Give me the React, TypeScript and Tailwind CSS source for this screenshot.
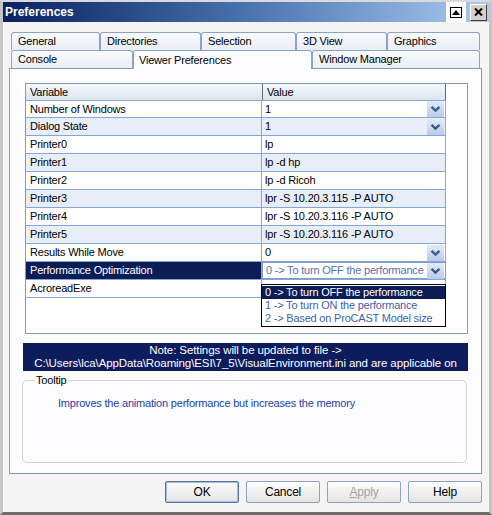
import React from "react";

type Row = { name: string; value: string; combo?: boolean };

const rows: Row[] = [
  { name: "Number of Windows", value: "1", combo: true },
  { name: "Dialog State", value: "1", combo: true },
  { name: "Printer0", value: "lp" },
  { name: "Printer1", value: "lp -d hp" },
  { name: "Printer2", value: "lp -d Ricoh" },
  { name: "Printer3", value: "lpr -S 10.20.3.115 -P AUTO" },
  { name: "Printer4", value: "lpr -S 10.20.3.116 -P AUTO" },
  { name: "Printer5", value: "lpr -S 10.20.3.116 -P AUTO" },
  { name: "Results While Move", value: "0", combo: true },
  { name: "Performance Optimization", value: "0 -> To turn OFF the performance", combo: true },
  { name: "AcroreadExe", value: "" },
];

const options = [
  "0 -> To turn OFF the performance",
  "1 -> To turn ON the performance",
  "2 -> Based on ProCAST Model size",
];

function DropBtn() {
  return (
    <div className="flex h-[16px] w-[17px] shrink-0 items-center justify-center bg-gradient-to-b from-[#e2ebf8] to-[#b7cbe9]">
      <svg width="11" height="8" viewBox="0 0 11 8">
        <path d="M1.5 1.8 L5.5 5.6 L9.5 1.8" fill="none" stroke="#3f5987" strokeWidth="2.3" />
      </svg>
    </div>
  );
}

function Tab({ label, w, active }: { label: string; w: string; active?: boolean }) {
  return (
    <div
      className={
        active
          ? `${w} relative z-10 -mb-px flex h-[19px] items-center rounded-t-[3px] border-x border-t border-[#8aa3c6] bg-[#fcfcfe] pl-[5px]`
          : `${w} flex h-[18px] items-center rounded-t-[3px] border-x border-t border-[#8aa3c6] bg-gradient-to-b from-[#f9fafd] to-[#e9eef6] pl-[6px]`
      }
    >
      {label}
    </div>
  );
}

function Button({ label, primary, disabled }: { label: React.ReactNode; primary?: boolean; disabled?: boolean }) {
  return (
    <div
      className={`flex h-[22px] w-[74px] items-center justify-center rounded-[2px] border bg-gradient-to-b from-[#fdfdfd] to-[#e4e4e4] text-[12px] ${
        primary ? "border-[#5a769e] shadow-[inset_0_0_0_1px_#a7bcd9]" : "border-[#8ea2bf]"
      } ${disabled ? "text-[#a3a3a3]" : "text-black"}`}
    >
      {label}
    </div>
  );
}

export default function App() {
  return (
    <div className="flex h-[515px] w-[492px] flex-col border-x-[3px] border-t-[2px] border-b-[3px] border-x-[#c6c6c6] border-t-[#dadada] border-b-[#6d6d6d] bg-[#f4f4f4] font-['Liberation_Sans',Arial,sans-serif] text-[11px] tracking-[-0.2px] text-black">
      {/* Title bar */}
      <div className="flex h-[20px] shrink-0 items-center bg-gradient-to-r from-[#0a2162] via-[#4a72b0] to-[#abcbee] pl-[2px]">
        <span className="text-[12px] font-bold tracking-normal text-white">Preferences</span>
        <div className="ml-auto flex h-full items-center">
          <div className="flex h-full w-[20px] items-center justify-center bg-white">
            <div className="flex h-[11px] w-[12px] items-center justify-center border border-black">
              <svg width="8" height="5" viewBox="0 0 8 5">
                <path d="M0 5 L4 0 L8 5 Z" fill="#000" />
              </svg>
            </div>
          </div>
          <div className="ml-[4px] flex h-[17px] w-[17px] items-center justify-center border border-t-white border-l-white border-r-[#404040] border-b-[#404040] bg-[#d4d0c8]">
            <svg width="9" height="8" viewBox="0 0 9 8">
              <path d="M1 0.5 L8 7.5 M8 0.5 L1 7.5" stroke="#000" strokeWidth="2" />
            </svg>
          </div>
          <div className="w-[2px]" />
        </div>
      </div>

      {/* Tabs */}
      <div className="ml-[8px] mt-[10px] flex flex-col">
        <div className="flex">
          <Tab label="General" w="w-[89px]" />
          <Tab label="Directories" w="w-[101px]" />
          <Tab label="Selection" w="w-[95px]" />
          <Tab label="3D View" w="w-[91px]" />
          <Tab label="Graphics" w="w-[93px]" />
        </div>
        <div className="flex">
          <Tab label="Console" w="w-[122px]" />
          <Tab label="Viewer Preferences" w="w-[179px]" active />
          <Tab label="Window Manager" w="w-[168px]" />
        </div>
      </div>

      {/* Panel */}
      <div className="ml-[6px] flex h-[406px] w-[473px] shrink-0 flex-col border border-[#7f9db9] bg-[#fcfcfe]">
        {/* Property table */}
        <div className="relative ml-[15px] mt-[14px] h-[251px] w-[443px] border border-[#7f9db9] bg-white">
          <div className="flex w-[420px] flex-col">
            <div className="flex h-[16px] items-center bg-gradient-to-b from-[#f5f8fc] to-[#dbe4f1]">
              <div className="w-[236px] pl-[4px]">Variable</div>
              <div className="flex h-full w-[184px] items-center border-x border-x-[#6a6a6a] pl-[4px]">Value</div>
            </div>
            {rows.map((r, i) => {
              const selected = i === 9;
              const alt = i % 2 === 1;
              return (
                <div
                  key={r.name}
                  className={`flex h-[18px] border-b border-[#84a7db] ${alt ? "bg-[#e8eef8]" : "bg-white"} ${i === 0 ? "border-t" : ""}`}
                >
                  <div
                    className={`flex w-[236px] items-center border-r border-[#84a7db] pl-[4px] ${
                      selected ? "bg-[#0c1c55] text-white" : ""
                    }`}
                  >
                    {r.name}
                  </div>
                  {selected ? (
                    <div className="flex w-[184px] items-center border border-[#7f9db9] bg-white pl-[3px] pr-[1px] text-[#5572aa]">
                      <span className="flex-1 whitespace-nowrap">{r.value}</span>
                      <DropBtn />
                    </div>
                  ) : (
                    <div className="flex w-[184px] items-center border-r border-[#84a7db] pl-[3px] pr-[1px]">
                      <span className="flex-1 whitespace-nowrap">{r.value}</span>
                      {r.combo && <DropBtn />}
                    </div>
                  )}
                </div>
              );
            })}
          </div>

          {/* Open drop-down list */}
          <div className="absolute left-[235px] top-[200px] flex w-[185px] flex-col border border-black bg-white py-[1px]">
            {options.map((o, i) => (
              <div
                key={o}
                className={`flex h-[13px] items-center pl-[3px] ${i === 0 ? "bg-[#0c1c55] text-white" : "text-[#3f5fae]"}`}
              >
                {o}
              </div>
            ))}
          </div>
        </div>

        {/* Note */}
        <div className="ml-[13px] mt-[9px] flex h-[28px] w-[445px] flex-col items-center justify-center bg-[#0c1c5c] text-[11.5px] leading-[13px] tracking-[-0.1px] text-white">
          <span>Note: Settings will be updated to file -&gt;</span>
          <span className="whitespace-nowrap">C:\Users\lca\AppData\Roaming\ESI\7_5\VisualEnvironment.ini and are applicable on</span>
        </div>

        {/* Tooltip group */}
        <fieldset className="ml-[12px] mt-[1px] h-[91px] w-[445px] rounded-[5px] border border-[#d3d3cc] pl-[35px]">
          <legend className="-ml-[24px] px-[2px]">Tooltip</legend>
          <div className="mt-[6px] text-[#2444a3]">Improves the animation performance but increases the memory</div>
        </fieldset>
      </div>

      {/* Buttons */}
      <div className="mr-[7px] mt-[7px] flex justify-end gap-[7px]">
        <Button label="OK" primary />
        <Button label="Cancel" />
        <Button
          label={
            <span>
              <span className="underline">A</span>pply
            </span>
          }
          disabled
        />
        <Button label="Help" />
      </div>
    </div>
  );
}
